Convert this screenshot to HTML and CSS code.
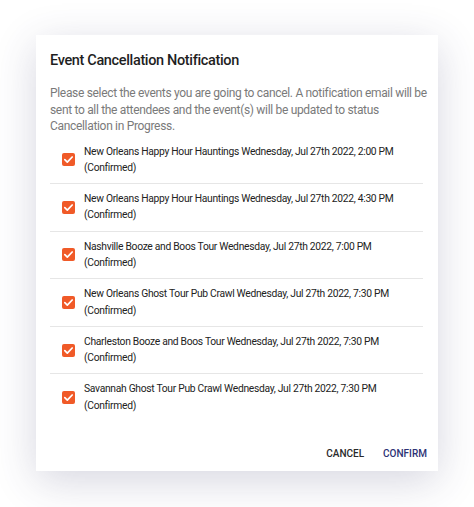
FILE: index.html
```html
<!DOCTYPE html>
<html>
<head>
<meta charset="utf-8">
<link rel="stylesheet" href="styles.css">
</head>
<body>
<div class="page">
  <div class="dialog">
    <h1 class="title">Event Cancellation Notification</h1>
    <p class="desc">Please select the events you are going to cancel. A notification email will be sent to all the attendees and the event(s) will be updated to status Cancellation in Progress.</p>
    <ul class="list">
      <li class="item"><span class="check"><svg viewBox="0 0 12 12"><path d="M2.6 6.2 L4.9 8.4 L9.4 3.7" fill="none" stroke="#fff" stroke-width="1.6" stroke-linecap="round" stroke-linejoin="round"/></svg></span><span class="label">New Orleans Happy Hour Hauntings Wednesday, Jul 27th 2022, 2:00 PM<br>(Confirmed)</span></li>
      <li class="item"><span class="check"><svg viewBox="0 0 12 12"><path d="M2.6 6.2 L4.9 8.4 L9.4 3.7" fill="none" stroke="#fff" stroke-width="1.6" stroke-linecap="round" stroke-linejoin="round"/></svg></span><span class="label">New Orleans Happy Hour Hauntings Wednesday, Jul 27th 2022, 4:30 PM<br>(Confirmed)</span></li>
      <li class="item"><span class="check"><svg viewBox="0 0 12 12"><path d="M2.6 6.2 L4.9 8.4 L9.4 3.7" fill="none" stroke="#fff" stroke-width="1.6" stroke-linecap="round" stroke-linejoin="round"/></svg></span><span class="label">Nashville Booze and Boos Tour Wednesday, Jul 27th 2022, 7:00 PM<br>(Confirmed)</span></li>
      <li class="item"><span class="check"><svg viewBox="0 0 12 12"><path d="M2.6 6.2 L4.9 8.4 L9.4 3.7" fill="none" stroke="#fff" stroke-width="1.6" stroke-linecap="round" stroke-linejoin="round"/></svg></span><span class="label">New Orleans Ghost Tour Pub Crawl Wednesday, Jul 27th 2022, 7:30 PM<br>(Confirmed)</span></li>
      <li class="item"><span class="check"><svg viewBox="0 0 12 12"><path d="M2.6 6.2 L4.9 8.4 L9.4 3.7" fill="none" stroke="#fff" stroke-width="1.6" stroke-linecap="round" stroke-linejoin="round"/></svg></span><span class="label">Charleston Booze and Boos Tour Wednesday, Jul 27th 2022, 7:30 PM<br>(Confirmed)</span></li>
      <li class="item"><span class="check"><svg viewBox="0 0 12 12"><path d="M2.6 6.2 L4.9 8.4 L9.4 3.7" fill="none" stroke="#fff" stroke-width="1.6" stroke-linecap="round" stroke-linejoin="round"/></svg></span><span class="label">Savannah Ghost Tour Pub Crawl Wednesday, Jul 27th 2022, 7:30 PM<br>(Confirmed)</span></li>
    </ul>
    <div class="actions">
      <button class="btn btn-cancel">CANCEL</button>
      <button class="btn btn-confirm">CONFIRM</button>
    </div>
  </div>
</div>
</body>
</html>
```

FILE: styles.css
```css
* { box-sizing: border-box; }
html, body { margin: 0; padding: 0; background: #ffffff; }
body { font-family: Roboto, "Liberation Sans", Arial, sans-serif; }
.page { padding: 35px 0 0 36px; min-height: 507px; }
.dialog {
  width: 402px;
  height: 436px;
  background: #ffffff;
  box-shadow: 0 10px 40px rgba(50, 50, 100, 0.2);
  padding: 16px 11px 0 14px;
  display: flex;
  flex-direction: column;
}
.title {
  margin: 0;
  font-size: 14.5px;
  font-weight: 500;
  letter-spacing: -0.35px;
  line-height: 20px;
  color: #1f1f1f;
}
.desc {
  margin: 14px 0 0 0;
  font-size: 12px;
  letter-spacing: -0.32px;
  line-height: 16.5px;
  color: #7a7a7a;
}
.list { list-style: none; margin: 2px 4px 0 0; padding: 0; }
.item {
  display: flex;
  align-items: center;
  padding: 7px 0;
  border-bottom: 1px solid #e6e6e6;
}
.item:last-child { border-bottom: none; }
.check {
  flex: none;
  width: 13px;
  height: 13px;
  margin: 0 9px 0 12px;
  background: #f05a28;
  border-radius: 2px;
  display: flex;
}
.check svg { width: 13px; height: 13px; }
.label {
  font-size: 10.3px;
  letter-spacing: -0.3px;
  line-height: 16.3px;
  color: #222222;
}
.actions {
  margin-top: auto;
  margin-bottom: 2px;
  display: flex;
  justify-content: flex-end;
  gap: 19px;
}
.btn {
  font-family: inherit;
  background: none;
  border: none;
  font-size: 10px;
  font-weight: 500;
  letter-spacing: 0;
  padding: 8px 0;
  line-height: 14px;
  cursor: pointer;
}
.btn-cancel { color: #2a2a2a; }
.btn-confirm { color: #2d3275; }
```
